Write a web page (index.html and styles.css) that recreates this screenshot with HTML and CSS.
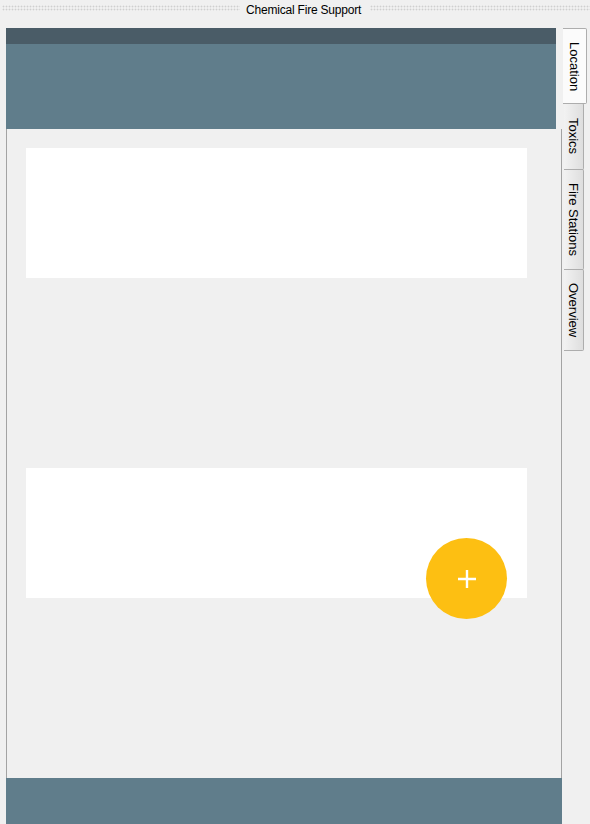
FILE: index.html
```html
<!DOCTYPE html>
<html>
<head>
<meta charset="utf-8">
<link rel="stylesheet" href="styles.css">
</head>
<body>
<div class="titlebar">
  <div class="dots dots-left"></div>
  <div class="title">Chemical Fire Support</div>
  <div class="dots dots-right"></div>
</div>
<div class="main">
  <div class="pane">
    <div class="header">
      <div class="header-top"></div>
      <div class="header-body"></div>
    </div>
    <div class="content">
      <div class="card"></div>
      <div class="card card-second"></div>
      <div class="fab">
        <svg width="22" height="22" viewBox="0 0 22 22"><path d="M11 2v18M2 11h18" stroke="#fff" stroke-width="2.4" fill="none"/></svg>
      </div>
    </div>
    <div class="footer"></div>
  </div>
  <div class="tabs">
    <div class="tab active">Location</div>
    <div class="tab t-toxics">Toxics</div>
    <div class="tab t-fire">Fire Stations</div>
    <div class="tab t-over">Overview</div>
    <div class="tab-rest"></div>
  </div>
</div>
</body>
</html>
```
FILE: styles.css
```css
html, body {
  margin: 0;
  padding: 0;
  background: #f0f0f0;
  font-family: "Liberation Sans", Arial, sans-serif;
  width: 590px;
  height: 824px;
  overflow: hidden;
}
.titlebar {
  height: 28px;
  display: flex;
  align-items: flex-start;
  padding: 0 0 0 2px;
  box-sizing: border-box;
}
.dots {
  height: 6px;
  margin-top: 5px;
  background-image: radial-gradient(circle, #cfcfcf 0.8px, transparent 1.1px);
  background-size: 3px 3px;
}
.dots-left {
  width: 238px;
  margin-right: 6px;
}
.dots-right {
  flex: 1;
  margin-left: 9px;
}
.title {
  font-size: 12px;
  letter-spacing: -0.2px;
  color: #000;
  line-height: 14px;
  margin-top: 3px;
  white-space: nowrap;
}
.main {
  display: flex;
  height: 796px;
  padding-left: 6px;
}
.pane {
  width: 556px;
  display: flex;
  flex-direction: column;
  position: relative;
}
.header {
  width: 550px;
}
.header-top {
  height: 16px;
  background: #4a5c67;
}
.header-body {
  height: 85px;
  background: #607d8b;
}
.content {
  flex: 1;
  border-left: 1px solid #a3a3a3;
  border-right: 1px solid #a3a3a3;
  padding: 19px 0 0 19px;
  position: relative;
  display: flex;
  flex-direction: column;
  gap: 190px;
}
.card {
  width: 501px;
  height: 130px;
  background: #ffffff;
}
.fab {
  position: absolute;
  left: 419px;
  top: 409px;
  width: 81px;
  height: 81px;
  border-radius: 50%;
  background: #fdbf12;
  display: flex;
  align-items: center;
  justify-content: center;
}
.footer {
  height: 46px;
  background: #607d8b;
}
.tabs {
  width: 28px;
  display: flex;
  flex-direction: column;
}
.tab {
  writing-mode: vertical-rl;
  font-size: 13px;
  color: #000;
  box-sizing: border-box;
  display: flex;
  align-items: center;
  justify-content: center;
  border: 1px solid #adadad;
  border-left: none;
  margin-left: 2px;
  width: 20px;
  background: linear-gradient(to right, #f2f2f2, #dedede);
  border-radius: 0 2px 2px 0;
}
.tab.active {
  margin-left: 1px;
  width: 24px;
  height: 76px;
  background: #fbfbfb;
  border-left: none;
  padding-top: 2px;
}
.t-toxics { height: 67px; margin-top: -1px; }
.t-fire { height: 101px; margin-top: -1px; }
.t-over { height: 82px; margin-top: -1px; }
.tab-rest {
  flex: 1;
}
```
